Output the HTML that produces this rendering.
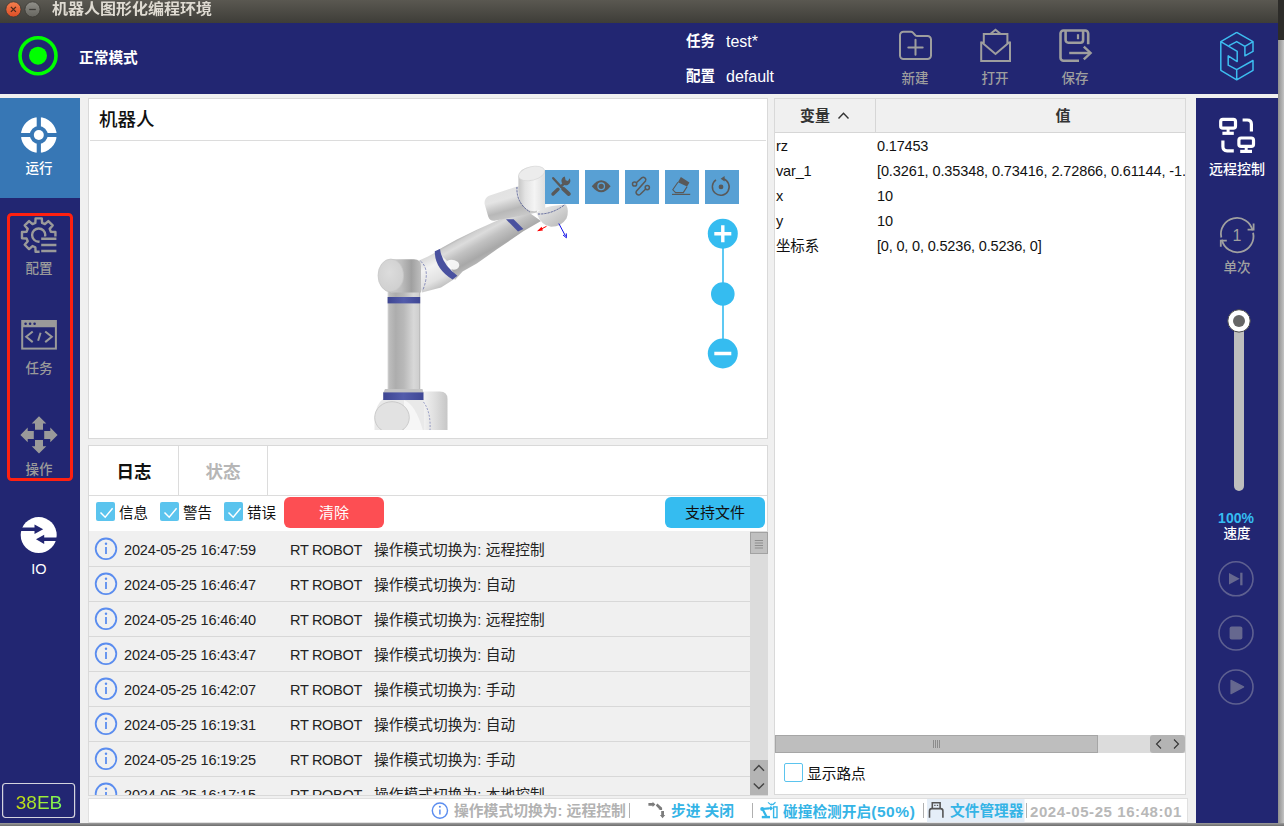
<!DOCTYPE html>
<html lang="zh-CN">
<head>
<meta charset="utf-8">
<title>机器人图形化编程环境</title>
<style>
*{box-sizing:border-box;margin:0;padding:0}
html,body{width:1284px;height:826px;overflow:hidden;background:#3c3b37}
body{font-family:"Liberation Sans","Noto Sans CJK SC",sans-serif;color:#111;position:relative}
.abs{position:absolute}
#desk{left:0;top:0;width:1284px;height:826px;background:linear-gradient(#2d2c29 0,#2d2c29 40px,#b0b0b0 40px,#b0b0b0 100%)}
#deskb{left:0;top:823px;width:1284px;height:3px;background:linear-gradient(#9c9c9c,#6c6c6c)}
#deskr{left:1278px;top:40px;width:6px;height:786px;background:linear-gradient(90deg,#8e8e8e,#c4c4c4)}
#win{left:0;top:0;width:1278px;height:823px;background:#f0f0f0;overflow:hidden}
#titlebar{left:0;top:0;width:1278px;height:23px;background:linear-gradient(#5a5851,#3e3d38)}
#titlebar .t{left:52px;top:-1px;transform:scaleY(.92);transform-origin:0 11px;line-height:20px;font-size:16px;font-weight:bold;color:#dfdbd2;white-space:nowrap}
#header{left:0;top:23px;width:1278px;height:71px;background:#222672}
#lside{left:0;top:98px;width:80px;height:725px;background:#222672}
#rside{left:1196px;top:98px;width:82px;height:725px;background:#222672}
.nav{left:-1px;width:80px;text-align:center;font-size:13.500px;font-weight:500;color:#9a9a9a;white-space:nowrap}
.panel{background:#fff;border:1px solid #d9d9d9}
.t{white-space:nowrap}
.rl{left:0;width:82px;text-align:center;line-height:22px;white-space:nowrap;font-weight:500}
.cb{position:absolute;top:56px;width:19px;height:19px;border-radius:2px;background:#5bc4ee}
.cl{top:55px;line-height:24px;font-size:14.500px;color:#111}
.row{position:absolute;left:0;width:661px;height:35px;border-bottom:1px solid #d8d8d8;font-size:14px;line-height:35px;color:#222}
.row span{top:1px}
.dt{font-size:14.500px;letter-spacing:-.150px}
.rt{font-size:14.500px;letter-spacing:-.300px}
.ms{font-size:14.670px;letter-spacing:.100px}
.vr{position:absolute;left:0;width:410px;height:25px;line-height:25px;font-size:14.500px;letter-spacing:-.170px;color:#111}
.vr span{top:1px}
.st{top:1px;line-height:23px;font-size:14.700px;font-weight:bold}
.hb{top:45px;width:60px;text-align:center;line-height:22px;font-size:13.5px;font-weight:500;color:#9e9e9e}
</style>
</head>
<body>
<div id="desk" class="abs"></div><div id="deskr" class="abs"></div><div id="deskb" class="abs"></div>
<div id="win" class="abs">
  <div id="titlebar" class="abs">
    <svg class="abs" style="left:0;top:0" width="50" height="23" viewBox="0 0 50 23">
      <defs>
        <linearGradient id="tc" x1="0" x2="0" y1="0" y2="1"><stop offset="0" stop-color="#f4804f"/><stop offset="1" stop-color="#dd4d25"/></linearGradient>
        <linearGradient id="tm" x1="0" x2="0" y1="0" y2="1"><stop offset="0" stop-color="#91908a"/><stop offset="1" stop-color="#66655f"/></linearGradient>
      </defs>
      <circle cx="13.400" cy="9.400" r="7.600" fill="url(#tc)" stroke="#3a3934" stroke-width=".800"/>
      <circle cx="32.500" cy="9.400" r="7.600" fill="url(#tm)" stroke="#3a3934" stroke-width=".800"/>
      <path d="M10.900 6.900 L15.900 11.900 M15.900 6.900 L10.900 11.900" stroke="#4a2a1c" stroke-width="1.300"/>
      <path d="M29.200 9.500 H35.800" stroke="#3c3b37" stroke-width="1.300"/>
    </svg>
    <div class="abs t">机器人图形化编程环境</div>
  </div>
  <div id="header" class="abs">
    <svg class="abs" style="left:0;top:0" width="1278" height="71" viewBox="0 23 1278 71">
      <circle cx="38" cy="55.7" r="18" fill="none" stroke="#00ff00" stroke-width="3.6"/>
      <circle cx="38" cy="55.7" r="9" fill="#00ff00"/>
      <g fill="none" stroke="#9e9e9e" stroke-width="2" stroke-linejoin="round" stroke-linecap="round">
        <path d="M900 35.3 a3.5 3.5 0 0 1 3.5 -3.5 h7.6 q1 0 1.8 .8 l2.4 2.6 q.8 .8 2 .8 h10.2 a3.5 3.5 0 0 1 3.5 3.5 v16.1 a3.5 3.5 0 0 1 -3.5 3.5 h-24 a3.5 3.5 0 0 1 -3.5 -3.5 z"/>
        <path d="M908.3 47.4 h14.4 M915.5 39.8 v15"/>
      </g>
      <g fill="none" stroke="#9e9e9e" stroke-width="2" stroke-linejoin="miter">
        <path d="M981.2 41.6 v19.4 h28.8 v-19.4"/>
        <path d="M983.8 43.5 v-9.5 h23.6 v9.5"/>
        <path d="M990.6 33.8 l4.9 -4 l4.9 4"/>
        <path d="M981.4 42 l14.1 12 l14.1 -12"/>
      </g>
      <g fill="none" stroke="#9e9e9e" stroke-width="2.6" stroke-linejoin="round">
        <path d="M1079 60.7 h-15.5 a3 3 0 0 1 -3 -3 v-24.2 a3 3 0 0 1 3 -3 h21.7 a3 3 0 0 1 3 3 v10.7"/>
        <path d="M1065.6 30.5 v9.6 a2.6 2.6 0 0 0 2.6 2.6 h12.3 a2.6 2.6 0 0 0 2.6 -2.6 v-9.6"/>
        <path d="M1069.2 53 h20.5" stroke-width="2.4"/>
        <path d="M1083.8 46.6 l6.8 6.4 l-6.8 6.4" stroke-width="2.4" stroke-linejoin="miter"/>
        <path d="M1078 34.2 v5" stroke-width="2.2"/>
      </g>
      <g fill="none" stroke="#3dbdf0" stroke-width="1.5" stroke-linejoin="round">
        <path d="M1236.7 32.4 L1253 41.6 V51.4 L1244.9 55.8 V46.3 L1253 41.6 M1244.9 46.3 L1236.7 41.6 L1229 45.6 M1220.8 41.6 L1237.2 51.4 V61.6 L1228.2 55.8 V65.2 L1236.7 69.6 L1253 60.5 V70.3 L1236.7 79.8 L1220.8 70.3 V41.6 L1236.7 32.4 M1236.7 69.6 V79.8"/>
      </g>
    </svg>
    <div class="abs t" style="left:79px;top:24px;line-height:22px;font-size:14.700px;font-weight:bold;color:#fff">正常模式</div>
    <div class="abs t" style="left:686px;top:7px;line-height:22px;font-size:14.5px;font-weight:bold;color:#fff">任务</div>
    <div class="abs t" style="left:726px;top:8px;line-height:22px;font-size:16px;color:#fff">test*</div>
    <div class="abs t" style="left:686px;top:42px;line-height:22px;font-size:14.5px;font-weight:bold;color:#fff">配置</div>
    <div class="abs t" style="left:726px;top:43px;line-height:22px;font-size:16px;color:#fff">default</div>
    <div class="abs t hb" style="left:885px">新建</div>
    <div class="abs t hb" style="left:965px">打开</div>
    <div class="abs t hb" style="left:1045px">保存</div>
  </div>
  <div id="lside" class="abs">
    <div class="abs" style="left:0;top:0;width:80px;height:100px;background:#3777b5"></div>
    <svg class="abs" style="left:0;top:0" width="80" height="725" viewBox="0 98 80 725">
      <defs><clipPath id="gc"><path d="M0 200 H80 V236.6 H39.6 V270 H0 Z"/></clipPath></defs>
      <g>
        <circle cx="38.8" cy="135" r="13.4" fill="none" stroke="#fff" stroke-width="8.8"/>
        <path d="M38.8 115 V155 M18 135 H60" stroke="#3777b5" stroke-width="4.2"/>
        <circle cx="38.8" cy="135" r="5" fill="#fff"/>
      </g>
      <rect x="8.5" y="214.5" width="63" height="265" rx="3" fill="none" stroke="#ff2010" stroke-width="3"/>
      <g clip-path="url(#gc)" fill="none" stroke="#9a9a9a" stroke-width="2.4" stroke-linejoin="round">
        <path d="M35.33 222.96 L35.60 218.38 L41.80 218.38 L42.07 222.96 L44.90 224.13 L48.33 221.09 L52.71 225.47 L49.67 228.90 L50.84 231.73 L55.42 232.00 L55.42 238.20 L50.84 238.47 L49.67 241.30 L52.71 244.73 L48.33 249.11 L44.90 246.07 L42.07 247.24 L41.80 251.82 L35.60 251.82 L35.33 247.24 L32.50 246.07 L29.07 249.11 L24.69 244.73 L27.73 241.30 L26.56 238.47 L21.98 238.20 L21.98 232.00 L26.56 231.73 L27.73 228.90 L24.69 225.47 L29.07 221.09 L32.50 224.13 Z"/>
        <circle cx="38.7" cy="235.1" r="6.6"/>
      </g>
      <path d="M41.2 238.7 H56.4 M41.2 245 H56.4 M41.2 251.1 H56.4" stroke="#9a9a9a" stroke-width="2.5"/>
      <g fill="none" stroke="#9a9a9a" stroke-width="2">
        <rect x="22.2" y="321" width="33.7" height="27.6"/>
        <path d="M22.2 324 H55.9" stroke-width="6.4"/>
        <path d="M32.7 331.5 L26.2 336.8 L32.7 342.1 M40.6 332.8 L38.1 340.8 M45.2 331.5 L51.8 336.8 L45.2 342.1"/>
      </g>
      <g fill="#222672"><circle cx="25.6" cy="323.7" r="1.3"/><circle cx="30.1" cy="323.7" r="1.3"/><circle cx="34.6" cy="323.7" r="1.3"/></g>
      <path d="M35.0 429.7 L35.0 423.6 L31.7 423.6 L39.0 416.3 L46.3 423.6 L43.0 423.6 L43.0 429.7Z M44.2 430.9 L50.3 430.9 L50.3 427.6 L57.6 434.9 L50.3 442.2 L50.3 438.9 L44.2 438.9Z M43.0 440.1 L43.0 446.2 L46.3 446.2 L39.0 453.5 L31.7 446.2 L35.0 446.2 L35.0 440.1Z M33.8 438.9 L27.7 438.9 L27.7 442.2 L20.4 434.9 L27.7 427.6 L27.7 430.9 L33.8 430.9Z" fill="#9a9a9a"/>
      <circle cx="38.7" cy="535.1" r="18" fill="#fff"/>
      <path d="M20 529.3 H36 M57.5 539.3 H43" stroke="#222672" stroke-width="3.4"/>
      <path d="M34.5 524.6 L43.2 529.3 L34.5 534 Z M44.2 534.8 L36 539.3 L44.2 543.9 Z" fill="#222672"/>
      <rect x="2.600" y="783.500" width="72" height="34" rx="3" fill="none" stroke="#d4d4de" stroke-width="1.200"/>
    </svg>
    <div class="abs nav" style="top:60px;line-height:22px;color:#fff">运行</div>
    <div class="abs nav" style="top:160px;line-height:22px">配置</div>
    <div class="abs nav" style="top:260px;line-height:22px">任务</div>
    <div class="abs nav" style="top:361px;line-height:22px">操作</div>
    <div class="abs nav" style="top:460px;line-height:22px;color:#fff;font-size:14.500px">IO</div>
    <div class="abs t" style="left:3px;top:687.500px;width:72px;height:34px;line-height:34px;text-align:center;font-size:19px;color:#9be22d;background:linear-gradient(90deg,#c8de10 22%,#78fc5c 85%);-webkit-background-clip:text;background-clip:text;-webkit-text-fill-color:transparent">38EB</div>
  </div>
  <div id="rside" class="abs">
    <svg class="abs" style="left:0;top:0" width="82" height="725" viewBox="1196 98 82 725">
      <g fill="none" stroke="#fff" stroke-width="3.2" stroke-linecap="butt" stroke-linejoin="round">
        <rect x="1220.7" y="119.3" width="14.8" height="8.8" rx="2.2"/>
        <path d="M1228.1 128.5 V132.5" stroke-width="3"/>
        <path d="M1222.4 133.3 H1233.8"/>
        <path d="M1242.6 120 H1247.2 Q1251.4 120 1251.4 124.2 V131.5"/>
        <rect x="1238.9" y="138" width="14.6" height="8.4" rx="2.2"/>
        <path d="M1246.2 146.6 V150.4" stroke-width="3"/>
        <path d="M1240.2 151.4 H1252"/>
        <path d="M1222.9 140.6 V146.6 Q1222.9 150.8 1227.1 150.8 H1233.8"/>
      </g>
      <g fill="none" stroke="#a0a0a0" stroke-width="1.8">
        <path d="M1221.3 237.5 A16 16 0 0 1 1252.6 230.4"/>
        <path d="M1253.1 232.7 A16 16 0 0 1 1221.8 239.8"/>
        <path d="M1247.6 229.6 H1253.6 V223.4" />
        <path d="M1226.8 240.6 H1220.8 V246.8" />
      </g>
      <rect x="1234" y="321" width="10" height="170" rx="5" fill="#bebebe"/>
      <rect x="1234" y="321" width="10" height="20" fill="#bebebe"/>
      <circle cx="1239" cy="320.9" r="11.2" fill="#fff" stroke="#4a4a4a" stroke-width="1"/>
      <circle cx="1239" cy="320.9" r="6" fill="#666"/>
      <g fill="none" stroke="#5e6090" stroke-width="1.6">
        <circle cx="1236" cy="578.8" r="17"/><circle cx="1236" cy="633" r="17"/><circle cx="1236" cy="687" r="17"/>
      </g>
      <g fill="#66688f">
        <path d="M1229 573 L1239.7 578.8 L1229 584.6 Z"/><rect x="1240.2" y="572.7" width="2.3" height="12.6"/>
        <rect x="1229.6" y="626.6" width="12.8" height="12.9" rx="2"/>
        <path d="M1231 680.4 L1243.6 686.9 L1231 693.6 Z" stroke="#66688f" stroke-width="1.2" stroke-linejoin="round"/>
      </g>
    </svg>
    <div class="abs rl" style="top:60px;color:#fff;font-size:14px">远程控制</div>
    <div class="abs rl" style="top:127px;color:#a0a0a0;font-size:16px">1</div>
    <div class="abs rl" style="top:159px;color:#a0a0a0;font-size:13.5px">单次</div>
    <div class="abs rl" style="top:409px;left:-1px;color:#35bdf2;font-size:14px;font-weight:bold">100%</div>
    <div class="abs rl" style="top:424.5px;color:#fff;font-size:13.5px">速度</div>
  </div>
  <div id="robot" class="abs panel" style="left:88px;top:98px;width:680px;height:341px">
    <div class="abs t" style="left:10px;top:8px;line-height:26px;font-size:18.500px;font-weight:500;color:#111">机器人</div>
    <div class="abs" style="left:1px;top:41px;width:676px;height:1px;background:#dcdcdc"></div>
    <svg class="abs" style="left:-1px;top:-1px" width="680" height="341" viewBox="88 98 680 341">
      <defs>
        <linearGradient id="gv" x1="0" x2="1" y1="0" y2="0">
          <stop offset="0" stop-color="#d4d4d4"/><stop offset=".060" stop-color="#bcbcbc"/><stop offset=".250" stop-color="#adadad"/><stop offset=".500" stop-color="#b9b9b9"/><stop offset=".800" stop-color="#d8d8d8"/><stop offset=".960" stop-color="#cfcfcf"/><stop offset="1" stop-color="#a8a8a8"/>
        </linearGradient>
        <linearGradient id="ga" gradientUnits="userSpaceOnUse" x1="470" y1="232" x2="485.500" y2="260">
          <stop offset="0" stop-color="#b4b4b4"/><stop offset=".070" stop-color="#cecece"/><stop offset=".220" stop-color="#dcdcdc"/><stop offset=".450" stop-color="#c2c2c2"/><stop offset=".800" stop-color="#a8a8a8"/><stop offset=".940" stop-color="#b4b4b4"/><stop offset="1" stop-color="#bdbdbd"/>
        </linearGradient>
        <linearGradient id="ge" gradientUnits="userSpaceOnUse" x1="428" y1="256" x2="444" y2="288">
          <stop offset="0" stop-color="#d8d8d8"/><stop offset=".300" stop-color="#f2f2f2"/><stop offset=".700" stop-color="#e2e2e2"/><stop offset="1" stop-color="#bababa"/>
        </linearGradient>
        <linearGradient id="gs" x1="0" x2="1" y1="0" y2="0">
          <stop offset="0" stop-color="#cccccc"/><stop offset=".350" stop-color="#bdbdbd"/><stop offset=".680" stop-color="#a0a0a0"/><stop offset="1" stop-color="#bebebe"/>
        </linearGradient>
        <linearGradient id="gw1" gradientUnits="userSpaceOnUse" x1="505" y1="190" x2="513" y2="218"><stop offset="0" stop-color="#e2e2e2"/><stop offset=".300" stop-color="#e4e4e4"/><stop offset=".700" stop-color="#b8b8b8"/><stop offset="1" stop-color="#c8c8c8"/></linearGradient>
        <linearGradient id="gw" x1="0" x2="0" y1="0" y2="1">
          <stop offset="0" stop-color="#ededed"/><stop offset=".400" stop-color="#dcdcdc"/><stop offset=".850" stop-color="#b8b8b8"/><stop offset="1" stop-color="#cfcfcf"/>
        </linearGradient>
        <linearGradient id="gw2" x1="0" x2="1" y1="0" y2="0">
          <stop offset="0" stop-color="#c6c6c6"/><stop offset=".250" stop-color="#e2e2e2"/><stop offset=".600" stop-color="#f4f4f4"/><stop offset="1" stop-color="#dedede"/>
        </linearGradient>
        <linearGradient id="gf" x1="0" x2="1" y1="0" y2="1">
          <stop offset="0" stop-color="#f0f0f0"/><stop offset=".500" stop-color="#d2d2d2"/><stop offset="1" stop-color="#b4b4b4"/>
        </linearGradient>
        <linearGradient id="gb2" x1="0" x2="1" y1="0" y2="0">
          <stop offset="0" stop-color="#f2f2f2"/><stop offset=".500" stop-color="#dedede"/><stop offset="1" stop-color="#c6c6c6"/>
        </linearGradient>
        <linearGradient id="gbl" x1="0" x2="1" y1="0" y2="0">
          <stop offset="0" stop-color="#3d4592"/><stop offset=".500" stop-color="#535cab"/><stop offset="1" stop-color="#3f4795"/>
        </linearGradient>
        <radialGradient id="gc2" cx=".450" cy=".400" r=".750">
          <stop offset="0" stop-color="#dcdcdc"/><stop offset=".750" stop-color="#d0d0d0"/><stop offset="1" stop-color="#b4b4b4"/>
        </radialGradient>
        <clipPath id="vp"><rect x="89" y="141" width="678" height="289"/></clipPath>
      </defs>
      <g clip-path="url(#vp)">
        <!-- base -->
        <path d="M423 391.500 H440 Q447.500 391.500 447.500 399 V431 H423 Z" fill="url(#gb2)"/>
        <path d="M383 399 H424 V431 H374.500 V418 Q376 404 383 399 Z" fill="#e9e9e9"/>
        <path d="M404 400 Q416 405 423 431 H404 Z" fill="#f6f6f6"/>
        <ellipse cx="392" cy="417.500" rx="17.300" ry="15.800" fill="#e2e2e2" stroke="#bdbdbd" stroke-width=".700"/>
        <path d="M423.500 402 Q431 412 430 430" fill="none" stroke="#5b64a8" stroke-width=".600" stroke-dasharray="2 1.500"/>
        <!-- vertical link -->
        <rect x="387.600" y="288" width="32.600" height="106" fill="url(#gv)"/>
        <path d="M385 389 H422.500 L423.500 393 H383.200 Z" fill="#c4c4c4"/>
        <rect x="383.200" y="392.400" width="40.300" height="7.600" fill="url(#gbl)"/>
        <rect x="387.600" y="297" width="32.600" height="6.400" fill="url(#gbl)"/>
        <!-- upper arm -->
        <path d="M437 250.600 L456.400 239.800 L475.700 230.200 L495.100 221.400 L506.700 216.600 L524 209 L541 221 L523.300 231.300 L496.200 249.800 L476.800 263.500 L462.600 271.600 L455 280 Z" fill="url(#ga)"/>
        <!-- elbow housing -->
        <path d="M419 260.500 L428 256.500 L437.500 251.200 L448 262 L456 278 L441 287.500 L422 292.500 L418 280 Z" fill="url(#ge)"/>
        <path d="M447 261 Q452 258 458 262 Q461 266 457 269 Q452 271 448 267 Z" fill="#fff" opacity=".850"/>
        <path d="M434.800 251.300 L440 249 Q442 264.500 457.400 275.700 L452.600 279.600 Q434.600 268.500 434.800 251.300 Z" fill="#49519f"/>
        <path d="M420.500 261 Q431 270 422.500 291" fill="none" stroke="#5b64a8" stroke-width=".700" stroke-dasharray="2.500 1.500"/>
        <!-- shoulder -->
        <path d="M391 259.300 H414 Q421 259.500 421 266 V292.500 H391 Z" fill="url(#gs)"/>
        <ellipse cx="390.800" cy="275.500" rx="12.800" ry="16.500" fill="url(#gc2)" stroke="#c2c2c2" stroke-width=".600"/>
        <!-- wrist band -->
        <path d="M506 219.300 L513.600 219.300 L523.400 229.100 L518 231.600 Z" fill="#49519f"/>
        <!-- wrist 1 -->
        <path d="M489 195.800 Q484 198.500 484.600 204 L488.200 216.500 Q490 221.800 495.500 220.600 L537 212.500 L540 181 L517 186.400 Z" fill="url(#gw1)"/>
        <!-- wrist 3 / flange -->
        <path d="M536.500 213 Q540 208 552 206 L566 204.500 Q569.500 211 566.500 218.500 Q561 227 551 226.800 Q541 225.500 536.500 213 Z" fill="url(#gf)"/>
        <!-- wrist 2 -->
        <path d="M518.400 176.500 Q520 168 531 166.600 Q543 165.800 545.200 171 V208 Q535 214 526 209 Q519 203 518.400 190 Z" fill="url(#gw2)"/>
        <ellipse cx="531.600" cy="173.500" rx="13.400" ry="6.800" transform="rotate(-14 531.600 173.500)" fill="#ececec" stroke="#cfcfcf" stroke-width=".500"/>
        <path d="M517 187 Q516 203 530 212" fill="none" stroke="#4a5390" stroke-width=".900" stroke-dasharray="2.200 1"/>
        <path d="M538 214 Q552 214.500 565 204.500" fill="none" stroke="#4a5390" stroke-width=".900" stroke-dasharray="2.200 1"/>
        <!-- axes -->
        <path d="M546.500 226.300 L539 230.300" stroke="#f00" stroke-width="1"/>
        <path d="M537 231.300 L541.600 226.800 L542.900 230.500 Z" fill="#f00"/>
        <path d="M558.800 223.500 L565.500 236" stroke="#1212e8" stroke-width="1"/>
        <path d="M563 235 L566.400 237.800 L566.300 233.400" fill="none" stroke="#1212e8" stroke-width="1"/>
      </g>
      <!-- toolbar -->
      <g fill="#58a0d4">
        <rect x="545" y="170" width="34" height="34"/><rect x="585" y="170" width="34" height="34"/><rect x="625" y="170" width="34" height="34"/><rect x="665" y="170" width="34" height="34"/><rect x="705" y="170" width="34" height="34"/>
      </g>
      <!-- tools icon -->
      <g stroke="#595959" fill="none" stroke-linecap="round">
        <path d="M553.200 178.200 L561.500 187.200" stroke-width="2.300"/>
        <path d="M563.2 188.800 L568.800 194" stroke-width="4"/>
        <path d="M553 194 L558 189.200" stroke-width="3.400"/>
        <path d="M561 186.400 L564.800 182.800" stroke-width="2.600"/>
      </g>
      <path d="M569.600 178.200 A4.500 4.500 0 1 1 564.800 176.400 L565.600 180.200 L568 181 Z" fill="#595959"/>
      <!-- eye icon -->
      <path d="M591.800 186.300 Q596.500 180.300 601.200 180.300 Q605.900 180.300 610.600 186.300 Q605.900 192.300 601.200 192.300 Q596.500 192.300 591.800 186.300 Z" fill="#595959"/>
      <circle cx="601.200" cy="186.300" r="3.300" fill="none" stroke="#58a0d4" stroke-width="1.300"/>
      <!-- path icon -->
      <g fill="none" stroke="#595959" stroke-width="1.500">
        <circle cx="634.600" cy="184" r="2.100"/>
        <circle cx="647.300" cy="187.600" r="2.100"/>
        <path d="M636.300 182.700 L641.700 177.900 A2.500 2.500 0 0 1 645.500 181 L636.400 191.200 A2.500 2.500 0 0 0 640.300 194.200 L645.700 189"/>
      </g>
      <!-- eraser icon -->
      <path d="M680.900 177.100 L689.400 182.600 L687.100 186.600 L677.900 182.200 Z" fill="#595959"/>
      <path d="M677.900 182.200 L672.800 189.800 L675.600 192.600 H683.300 L687.100 186.600" fill="none" stroke="#595959" stroke-width="1.100"/>
      <path d="M672 194.400 H690.200" stroke="#595959" stroke-width="1.200"/>
      <!-- reset icon -->
      <path d="M716 179.900 A8.400 8.400 0 1 0 723.200 178.800" fill="none" stroke="#595959" stroke-width="1.500"/>
      <path d="M724.600 176 L720.600 178.700 L724.600 181.400 Z" fill="#595959"/>
      <circle cx="721" cy="186.900" r="2.400" fill="#595959"/>
      <!-- zoom -->
      <path d="M723 240 V350" stroke="#35bcf0" stroke-width="1.600"/>
      <circle cx="722.800" cy="233.700" r="15" fill="#35bcf0"/>
      <circle cx="722.800" cy="294" r="11.800" fill="#35bcf0"/>
      <circle cx="722.800" cy="353.500" r="15" fill="#35bcf0"/>
      <path d="M714.300 233.700 H731.300 M722.800 225.200 V242.200 M714.300 353.500 H731.300" stroke="#fff" stroke-width="3.400"/>
    </svg>
  </div>
  <div id="log" class="abs panel" style="left:88px;top:445px;width:680px;height:351px">
    <div class="abs" style="left:0;top:0;width:678px;height:49px;background:#fff"></div>
    <div class="abs" style="left:89px;top:0;width:1px;height:49px;background:#dcdcdc"></div>
    <div class="abs" style="left:178px;top:0;width:1px;height:49px;background:#dcdcdc"></div>
    <div class="abs" style="left:0;top:49px;width:678px;height:1px;background:#dcdcdc"></div>
    <div class="abs t" style="left:0;top:12.500px;width:90px;text-align:center;line-height:26px;font-size:17.5px;font-weight:bold;color:#111">日志</div>
    <div class="abs t" style="left:89px;top:12.500px;width:90px;text-align:center;line-height:26px;font-size:17.5px;font-weight:bold;color:#b6b6b6">状态</div>
    <div class="cb" style="left:7px"></div><div class="abs t cl" style="left:30px">信息</div>
    <div class="cb" style="left:71px"></div><div class="abs t cl" style="left:94px">警告</div>
    <div class="cb" style="left:135px"></div><div class="abs t cl" style="left:158px">错误</div>
    <svg class="abs" style="left:0;top:50px" width="200" height="34" viewBox="88 495 200 34"><path d="M99.500 511.500 L104.200 516.200 L111.600 507.300 M163.500 511.500 L168.200 516.200 L175.600 507.300 M227.500 511.500 L232.200 516.200 L239.600 507.300" fill="none" stroke="#fff" stroke-width="1.500"/></svg>
    <div class="abs t" style="left:195px;top:51px;width:100px;height:31px;border-radius:6px;background:#fd4e53;color:#fff;text-align:center;line-height:31px;font-size:15px">清除</div>
    <div class="abs t" style="left:576px;top:51px;width:100px;height:31px;border-radius:6px;background:#35bcf0;color:#111;text-align:center;line-height:31px;font-size:15px">支持文件</div>
    <div class="abs" style="left:0;top:85px;width:661px;height:264px;background:#f0f0f0;overflow:hidden">
<div class="row" style="top:1px"><svg class="abs" style="left:5px;top:5px" width="24" height="24" viewBox="0 0 24 24"><circle cx="12" cy="11.800" r="10.300" fill="none" stroke="#5b8def" stroke-width="1.800"/><path d="M12 10 V17" stroke="#5b8def" stroke-width="1.800"/><circle cx="12" cy="6.800" r="1.200" fill="#5b8def"/></svg><span class="abs t dt" style="left:35px">2024-05-25 16:47:59</span><span class="abs t rt" style="left:201px">RT ROBOT</span><span class="abs t ms" style="left:285px">操作模式切换为: 远程控制</span></div>
<div class="row" style="top:36px"><svg class="abs" style="left:5px;top:5px" width="24" height="24" viewBox="0 0 24 24"><circle cx="12" cy="11.800" r="10.300" fill="none" stroke="#5b8def" stroke-width="1.800"/><path d="M12 10 V17" stroke="#5b8def" stroke-width="1.800"/><circle cx="12" cy="6.800" r="1.200" fill="#5b8def"/></svg><span class="abs t dt" style="left:35px">2024-05-25 16:46:47</span><span class="abs t rt" style="left:201px">RT ROBOT</span><span class="abs t ms" style="left:285px">操作模式切换为: 自动</span></div>
<div class="row" style="top:71px"><svg class="abs" style="left:5px;top:5px" width="24" height="24" viewBox="0 0 24 24"><circle cx="12" cy="11.800" r="10.300" fill="none" stroke="#5b8def" stroke-width="1.800"/><path d="M12 10 V17" stroke="#5b8def" stroke-width="1.800"/><circle cx="12" cy="6.800" r="1.200" fill="#5b8def"/></svg><span class="abs t dt" style="left:35px">2024-05-25 16:46:40</span><span class="abs t rt" style="left:201px">RT ROBOT</span><span class="abs t ms" style="left:285px">操作模式切换为: 远程控制</span></div>
<div class="row" style="top:106px"><svg class="abs" style="left:5px;top:5px" width="24" height="24" viewBox="0 0 24 24"><circle cx="12" cy="11.800" r="10.300" fill="none" stroke="#5b8def" stroke-width="1.800"/><path d="M12 10 V17" stroke="#5b8def" stroke-width="1.800"/><circle cx="12" cy="6.800" r="1.200" fill="#5b8def"/></svg><span class="abs t dt" style="left:35px">2024-05-25 16:43:47</span><span class="abs t rt" style="left:201px">RT ROBOT</span><span class="abs t ms" style="left:285px">操作模式切换为: 自动</span></div>
<div class="row" style="top:141px"><svg class="abs" style="left:5px;top:5px" width="24" height="24" viewBox="0 0 24 24"><circle cx="12" cy="11.800" r="10.300" fill="none" stroke="#5b8def" stroke-width="1.800"/><path d="M12 10 V17" stroke="#5b8def" stroke-width="1.800"/><circle cx="12" cy="6.800" r="1.200" fill="#5b8def"/></svg><span class="abs t dt" style="left:35px">2024-05-25 16:42:07</span><span class="abs t rt" style="left:201px">RT ROBOT</span><span class="abs t ms" style="left:285px">操作模式切换为: 手动</span></div>
<div class="row" style="top:176px"><svg class="abs" style="left:5px;top:5px" width="24" height="24" viewBox="0 0 24 24"><circle cx="12" cy="11.800" r="10.300" fill="none" stroke="#5b8def" stroke-width="1.800"/><path d="M12 10 V17" stroke="#5b8def" stroke-width="1.800"/><circle cx="12" cy="6.800" r="1.200" fill="#5b8def"/></svg><span class="abs t dt" style="left:35px">2024-05-25 16:19:31</span><span class="abs t rt" style="left:201px">RT ROBOT</span><span class="abs t ms" style="left:285px">操作模式切换为: 自动</span></div>
<div class="row" style="top:211px"><svg class="abs" style="left:5px;top:5px" width="24" height="24" viewBox="0 0 24 24"><circle cx="12" cy="11.800" r="10.300" fill="none" stroke="#5b8def" stroke-width="1.800"/><path d="M12 10 V17" stroke="#5b8def" stroke-width="1.800"/><circle cx="12" cy="6.800" r="1.200" fill="#5b8def"/></svg><span class="abs t dt" style="left:35px">2024-05-25 16:19:25</span><span class="abs t rt" style="left:201px">RT ROBOT</span><span class="abs t ms" style="left:285px">操作模式切换为: 手动</span></div>
<div class="row" style="top:246px"><svg class="abs" style="left:5px;top:5px" width="24" height="24" viewBox="0 0 24 24"><circle cx="12" cy="11.800" r="10.300" fill="none" stroke="#5b8def" stroke-width="1.800"/><path d="M12 10 V17" stroke="#5b8def" stroke-width="1.800"/><circle cx="12" cy="6.800" r="1.200" fill="#5b8def"/></svg><span class="abs t dt" style="left:35px">2024-05-25 16:17:15</span><span class="abs t rt" style="left:201px">RT ROBOT</span><span class="abs t ms" style="left:285px">操作模式切换为: 本地控制</span></div>

    </div>
    <div class="abs" style="left:661px;top:85px;width:18px;height:264px;background:#dcdcdc"></div>
    <div class="abs" style="left:661px;top:86px;width:18px;height:22px;background:#c0c0c0;border:1px solid #a2a2a2"></div>
    <div class="abs" style="left:661px;top:314px;width:18px;height:35px;background:#b4b4b4"></div>
    <svg class="abs" style="left:661px;top:85px" width="18" height="264" viewBox="0 0 18 264"><path d="M4.800 9.500 H13 M4.800 12 H13 M4.800 14.500 H13 M4.800 17 H13" stroke="#8e8e8e" stroke-width="1"/><path d="M3.800 239.700 L8.900 234.600 L14 239.700 M3.800 252.600 L8.900 257.600 L14 252.600" fill="none" stroke="#444" stroke-width="1.400"/></svg>
  </div>
  <div id="vars" class="abs panel" style="left:774px;top:98px;width:412px;height:697px;overflow:hidden">
    <div class="abs" style="left:0;top:0;width:410px;height:34px;background:#f0f0f0;border-bottom:1px solid #d6d6d6"></div>
    <div class="abs" style="left:100px;top:0;width:1px;height:34px;background:#d6d6d6"></div>
    <div class="abs t" style="left:25px;top:5px;line-height:24px;font-size:15px;font-weight:bold;color:#333">变量</div>
    <svg class="abs" style="left:62px;top:10px" width="14" height="14" viewBox="0 0 14 14"><path d="M1.500 9.500 L6.500 4.200 L11.500 9.500" fill="none" stroke="#333" stroke-width="1.400"/></svg>
    <div class="abs t" style="left:101px;top:5px;width:374px;text-align:center;line-height:24px;font-size:15px;font-weight:bold;color:#333">值</div>
<div class="vr" style="top:34px"><span class="abs t" style="left:1px">rz</span><span class="abs t" style="left:102px">0.17453</span></div>
<div class="vr" style="top:59px"><span class="abs t" style="left:1px">var_1</span><span class="abs t" style="left:102px;letter-spacing:-.110px">[0.3261, 0.35348, 0.73416, 2.72866, 0.61144, -1.5708]</span></div>
<div class="vr" style="top:84px"><span class="abs t" style="left:1px">x</span><span class="abs t" style="left:102px">10</span></div>
<div class="vr" style="top:109px"><span class="abs t" style="left:1px">y</span><span class="abs t" style="left:102px">10</span></div>
<div class="vr" style="top:134px"><span class="abs t" style="left:1px">坐标系</span><span class="abs t" style="left:102px">[0, 0, 0, 0.5236, 0.5236, 0]</span></div>

    <div class="abs" style="left:0;top:636px;width:410px;height:18px;background:#dcdcdc"></div>
    <div class="abs" style="left:0;top:636px;width:323px;height:18px;background:#bebebe;border:1px solid #a6a6a6"></div>
    <div class="abs" style="left:375px;top:636px;width:35px;height:18px;background:#b4b4b4;border-radius:3px"></div>
    <svg class="abs" style="left:0;top:636px" width="410" height="18" viewBox="0 0 410 18"><path d="M158.500 5 V13 M160.500 5 V13 M162.500 5 V13 M164.500 5 V13" stroke="#8c8c8c" stroke-width="1"/><path d="M386 4.500 L381.500 9 L386 13.500 M399 4.500 L403.500 9 L399 13.500" fill="none" stroke="#333" stroke-width="1.100"/></svg>
    <div class="abs" style="left:9px;top:664px;width:19px;height:19px;border:1px solid #5bc4ee;border-radius:2px;background:#fff"></div>
    <div class="abs t" style="left:32px;top:663px;line-height:24px;font-size:14.700px;color:#111">显示路点</div>
  </div>
  <div id="status" class="abs" style="left:88px;top:798px;width:1100px;height:25px;background:#fff;border:1px solid #e0e0e0">
    <svg class="abs" style="left:-1px;top:-1px" width="1100" height="25" viewBox="88 798 1100 25">
      <circle cx="439.900" cy="810.600" r="7.600" fill="none" stroke="#5b8def" stroke-width="1.400"/>
      <path d="M439.900 809.400 V814.600" stroke="#5b8def" stroke-width="1.500"/><circle cx="439.900" cy="806.800" r="1" fill="#5b8def"/>
      <path d="M629.500 803 V818 M752.500 803 V818 M923.500 803 V818 M1026.500 803 V818" stroke="#b0b0b0" stroke-width="1"/>
      <rect x="927" y="799" width="97.500" height="23.400" fill="#e5eef8"/>
      <path d="M648.400 803.100 H652.600 V801.800 L655.400 804.400 L652.600 807 V805.700 H648.400 Z M657.400 803.600 L662.100 807.700 V805.800 V809.900 H657.900 L659.800 809.700 L655.800 805.400 Z M661.200 811.100 H664 V815 H665.200 L662.600 818.200 L659.900 815 H661.200 Z" fill="#7c7c7c"/>
      <g fill="none" stroke="#35b6e8" stroke-width="1.500">
        <path d="M761.800 817.100 H770" stroke-width="2.400"/>
        <path d="M766.300 816.200 L762.500 809 L769 808.300" stroke-width="2.200"/>
        <rect x="773.600" y="806.900" width="3.400" height="10.700" stroke-width="1.400"/>
        <path d="M771.600 805.400 L768 802.400 M772.600 805 L775.500 802.300 M771.800 805 V803.400" stroke-width="1.200"/>
      </g>
      <circle cx="762.200" cy="808.900" r="2" fill="#35b6e8"/>
      <path d="M768.600 808.200 L770.800 806 L773 808.200 L770.800 810.400 Z" fill="#35b6e8"/>
      <g fill="none" stroke="#555" stroke-width="1.600">
        <path d="M929.500 817.800 V811 Q929.500 808.600 931.800 808.600 H940.600 Q942.900 808.600 942.900 811 V817.800"/>
        <path d="M932.300 808.600 V802.800 H940.100 V808.600"/>
      </g>
      <path d="M934.200 804.800 H935.600 V806 H934.200 Z M936.800 804.800 H938.200 V806 H936.800 Z" fill="#555"/>
    </svg>
    <div class="abs t st" style="left:365px;color:#b2b2b2;font-size:14.800px">操作模式切换为: 远程控制</div>
    <div class="abs t st" style="left:582px;color:#35b4e6">步进 关闭</div>
    <div class="abs t st" style="left:694px;color:#35b4e6">碰撞检测开启<span style="letter-spacing:.600px;font-size:15.500px">(50%)</span></div>
    <div class="abs t st" style="left:861px;color:#35b4e6">文件管理器</div>
    <div class="abs t st" style="left:941px;color:#b8b8b8;font-size:15px;letter-spacing:.580px">2024-05-25 16:48:01</div>
  </div>
</div>
</body>
</html>
